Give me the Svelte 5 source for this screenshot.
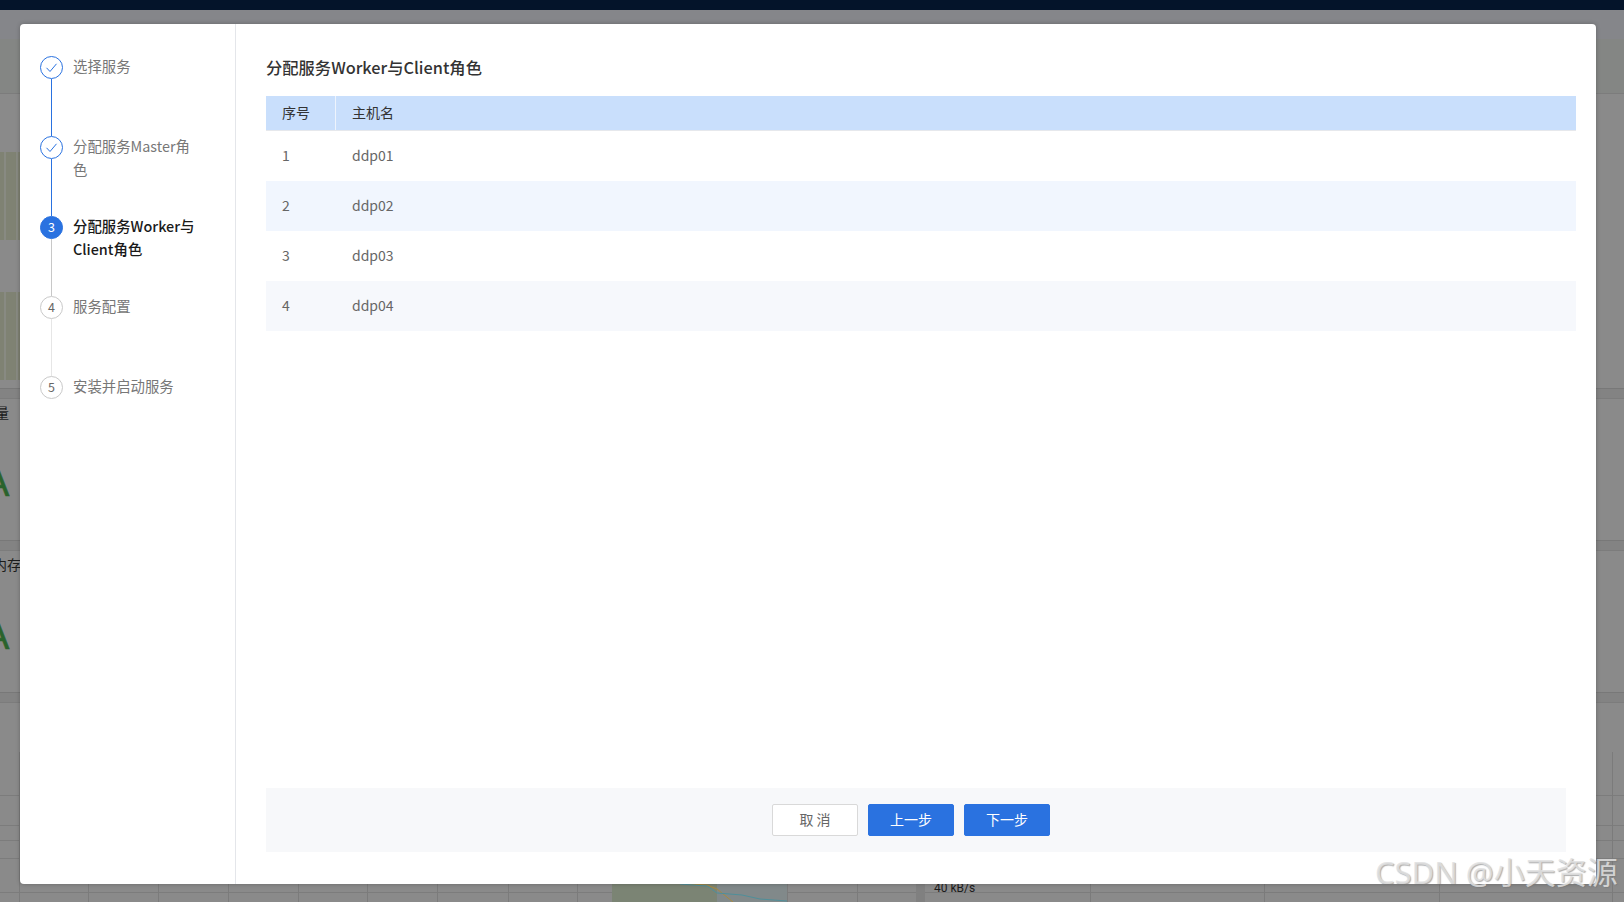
<script>
  const steps = [
    { label: '选择服务', state: 'done' },
    { label: '分配服务Master角色', state: 'done' },
    { label: '分配服务Worker与Client角色', state: 'active' },
    { label: '服务配置', state: 'todo' },
    { label: '安装并启动服务', state: 'todo' }
  ];

  const hosts = ['ddp01', 'ddp02', 'ddp03', 'ddp04'];

  // grid lines of the charts behind the overlay
  const leftCols = [19, 88, 158, 228, 298, 367, 437, 508, 577, 647, 716, 787, 857];
  const rightCols = [1090, 1264, 1439, 1612];
</script>

<div class="page">
  <div class="topbar"></div>

  <div class="backdrop">
    <div class="bg-line line-a"></div>
    <div class="bg-bars bars-a"></div>
    <div class="bg-bars bars-b"></div>
    <div class="bg-band band-a"></div>
    <div class="bg-band band-b"></div>
    <div class="bg-band band-c"></div>
    <div class="bg-line line-b"></div>
    <div class="bg-line line-c"></div>
    <div class="bg-line line-d"></div>
    <div class="bg-line line-e"></div>
    <div class="bg-line line-f"></div>
    <span class="bg-text text-a">量</span>
    <span class="bg-big big-a">A</span>
    <span class="bg-text text-b">内存</span>
    <span class="bg-big big-b">A</span>
    {#each leftCols as x}
      <i class="grid-line" style="left: {x}px"></i>
    {/each}
    {#each rightCols as x}
      <i class="grid-line" style="left: {x}px"></i>
    {/each}
    <div class="chart-area"></div>
    <div class="chart-gap"></div>
    <svg class="chart-svg" width="160" height="18" viewBox="680 884 160 18">
      <path d="M687 884L707 885 717 889 733 902" fill="none" stroke="#a98a3e" />
      <path d="M680 884L707 886 717 893 742 895 760 899 787 901" fill="none" stroke="#4f8f9a" />
    </svg>
    <span class="rate">40 kB/s</span>
  </div>

  <div class="modal">
    <aside class="sidebar">
      {#each steps as step, i}
        <div class="step {step.state}">
          <div class="rail">
            <div class="dot">
              {#if step.state === 'done'}
                <svg width="13" height="13" viewBox="0 0 13 13">
                  <path d="M1.5 6.8L5 10.5 11.5 2.8" fill="none" stroke="#2a72e0" stroke-width="1" />
                </svg>
              {:else}
                {i + 1}
              {/if}
            </div>
            {#if i < steps.length - 1}
              <div class="line" class:next-todo={i === 3}></div>
            {/if}
          </div>
          <div class="label">{step.label}</div>
        </div>
      {/each}
    </aside>

    <main class="content">
      <h2>分配服务Worker与Client角色</h2>
      <div class="table">
        <div class="row head">
          <div class="cell num">序号</div>
          <div class="cell">主机名</div>
        </div>
        {#each hosts as host, i}
          <div class="row body" class:odd={i === 1} class:even={i === 3}>
            <div class="cell num">{i + 1}</div>
            <div class="cell">{host}</div>
          </div>
        {/each}
      </div>
      <div class="footer">
        <button class="btn plain">取 消</button>
        <button class="btn primary">上一步</button>
        <button class="btn primary">下一步</button>
      </div>
    </main>
  </div>

  <div class="watermark">CSDN @小天资源</div>
</div>

<style>
  :global(body) {
    margin: 0;
    overflow: hidden;
  }

  .page {
    position: relative;
    width: 1624px;
    height: 902px;
    overflow: hidden;
    background: #8a8a8a;
    font-family: "Noto Sans CJK SC", "Noto Sans", sans-serif;
  }

  .topbar {
    height: 10px;
    background: #04142a;
  }

  .backdrop {
    position: absolute;
    inset: 0;
    top: 10px;
    background: linear-gradient(#85868a 0, #85868a 29px, #848684 29px, #848684 83px, #8a8a8a 84px);
  }

  .bg-line {
    position: absolute;
    left: 0;
    right: 0;
    height: 1px;
    background: #7c7c7c;
  }

  .line-a { top: 83px; }
  .line-b { top: 785px; }
  .line-c { top: 815px; }
  .line-d { top: 830px; }
  .line-e { top: 848px; }
  .line-f { top: 882px; }

  .bg-band {
    position: absolute;
    left: 0;
    right: 0;
    height: 9px;
    background: #838383;
    border-top: 1px solid #787878;
    border-bottom: 1px solid #7c7c7c;
  }

  .band-a { top: 378px; }
  .band-b { top: 530px; }
  .band-c { top: 682px; }

  .bg-bars {
    position: absolute;
    left: 0;
    width: 20px;
    background: linear-gradient(90deg, #7f8273 0, #7f8273 4px, #888a82 4px, #888a82 6px, #7f8273 6px, #7f8273 16px, #888a82 16px, #888a82 18px, #7f8273 18px);
  }

  .bars-a { top: 142px; height: 88px; }
  .bars-b { top: 282px; height: 88px; }

  .bg-text {
    position: absolute;
    font-size: 14px;
    line-height: 20px;
    color: #1c1c1c;
  }

  .text-a { left: -5px; top: 392px; }
  .text-b { left: -7px; top: 544px; }

  .bg-big {
    position: absolute;
    font-family: "Liberation Sans", sans-serif;
    font-size: 38px;
    line-height: 46px;
    color: #2a632c;
    -webkit-text-stroke: 0.6px #2a632c;
  }

  .big-a { left: -16px; top: 450px; }
  .big-b { left: -16px; top: 603px; }

  .grid-line {
    position: absolute;
    top: 742px;
    bottom: 0;
    width: 1px;
    background: #7b7b7b;
  }

  .chart-area {
    position: absolute;
    left: 612px;
    width: 175px;
    top: 860px;
    bottom: 0;
    background: linear-gradient(90deg, #7b8474 0, #7b8474 105px, #81898a 105px, #81898a 100%);
  }

  .chart-gap {
    position: absolute;
    left: 916px;
    width: 9px;
    top: 742px;
    bottom: 0;
    background: #808080;
  }

  .chart-svg {
    position: absolute;
    left: 680px;
    top: 874px;
  }

  .rate {
    position: absolute;
    left: 934px;
    top: 869px;
    font-family: Roboto, sans-serif;
    font-size: 12px;
    line-height: 18px;
    color: #1c1c1c;
  }

  .modal {
    position: absolute;
    left: 20px;
    top: 24px;
    width: 1576px;
    height: 860px;
    display: flex;
    background: #fff;
    border-radius: 4px;
    box-shadow: 0 0 4px rgba(0, 0, 0, 0.25);
  }

  .sidebar {
    width: 216px;
    flex: none;
    padding: 32px 20px 0;
    box-sizing: border-box;
    border-right: 1px solid #e4e6ea;
  }

  .step {
    display: flex;
    height: 80px;
  }

  .rail {
    width: 23px;
    flex: none;
    display: flex;
    flex-direction: column;
    align-items: center;
    margin-right: 10px;
  }

  .dot {
    width: 23px;
    height: 23px;
    flex: none;
    box-sizing: border-box;
    border: 1px solid #c9c9c9;
    border-radius: 50%;
    display: flex;
    align-items: center;
    justify-content: center;
    font-size: 12.5px;
    padding-bottom: 2px;
    color: #666;
    background: #fff;
  }

  .line {
    flex: 1;
    width: 1px;
    background: #c8c8c8;
  }

  .line.next-todo {
    background: #e6e6e6;
  }

  .done .dot {
    border-color: #2a72e0;
    padding-bottom: 0;
  }

  .done .line {
    background: #2a72e0;
  }

  .active .dot {
    background: #2a72e0;
    border-color: #2a72e0;
    color: #fff;
  }

  .label {
    width: 122px;
    font-size: 14.4px;
    line-height: 23px;
    margin-top: -2px;
    color: #777;
  }

  .active .label {
    color: #1a1a1a;
    font-weight: 500;
  }

  .content {
    flex: 1;
    min-width: 0;
    padding: 0 20px 0 30px;
    display: flex;
    flex-direction: column;
  }

  h2 {
    margin: 30px 0 15px;
    font-size: 16.3px;
    line-height: 27px;
    font-weight: 500;
    color: #333;
  }

  .table {
    flex: 1;
  }

  .row {
    display: flex;
    height: 50px;
    align-items: stretch;
    font-size: 14px;
    color: #666;
  }

  .row.head {
    height: 35px;
    box-sizing: border-box;
    border-bottom: 1px solid #e6e8ec;
    background: #c9dffc;
    color: #333;
  }

  .row.odd {
    background: #f1f6fe;
  }

  .row.even {
    background: #f6f8fc;
  }

  .cell {
    display: flex;
    align-items: center;
    padding-left: 16px;
    padding-bottom: 2px;
    box-sizing: border-box;
  }

  .cell.num {
    width: 70px;
    flex: none;
  }

  .head .cell.num {
    border-right: 1px solid #eef4fd;
  }

  .footer {
    height: 64px;
    margin: 0 10px 32px 0;
    padding-right: 10px;
    box-sizing: border-box;
    display: flex;
    justify-content: center;
    align-items: center;
    gap: 10px;
    background: #f7f8fa;
  }

  .btn {
    width: 86px;
    height: 32px;
    padding: 0 0 2px;
    box-sizing: border-box;
    border-radius: 2px;
    font-family: inherit;
    font-size: 14px;
  }

  .plain {
    background: #fff;
    border: 1px solid #d9d9d9;
    color: #666;
  }

  .primary {
    background: #2a72e0;
    border: 1px solid #2a72e0;
    color: #fff;
  }

  .watermark {
    position: absolute;
    left: 1375px;
    top: 850px;
    font-family: "Noto Sans", "Noto Sans CJK SC", sans-serif;
    font-size: 31px;
    line-height: 44px;
    white-space: nowrap;
    color: rgba(225, 225, 225, 0.85);
    text-shadow: 1px 1px 1px rgba(120, 120, 120, 0.6);
  }
</style>
